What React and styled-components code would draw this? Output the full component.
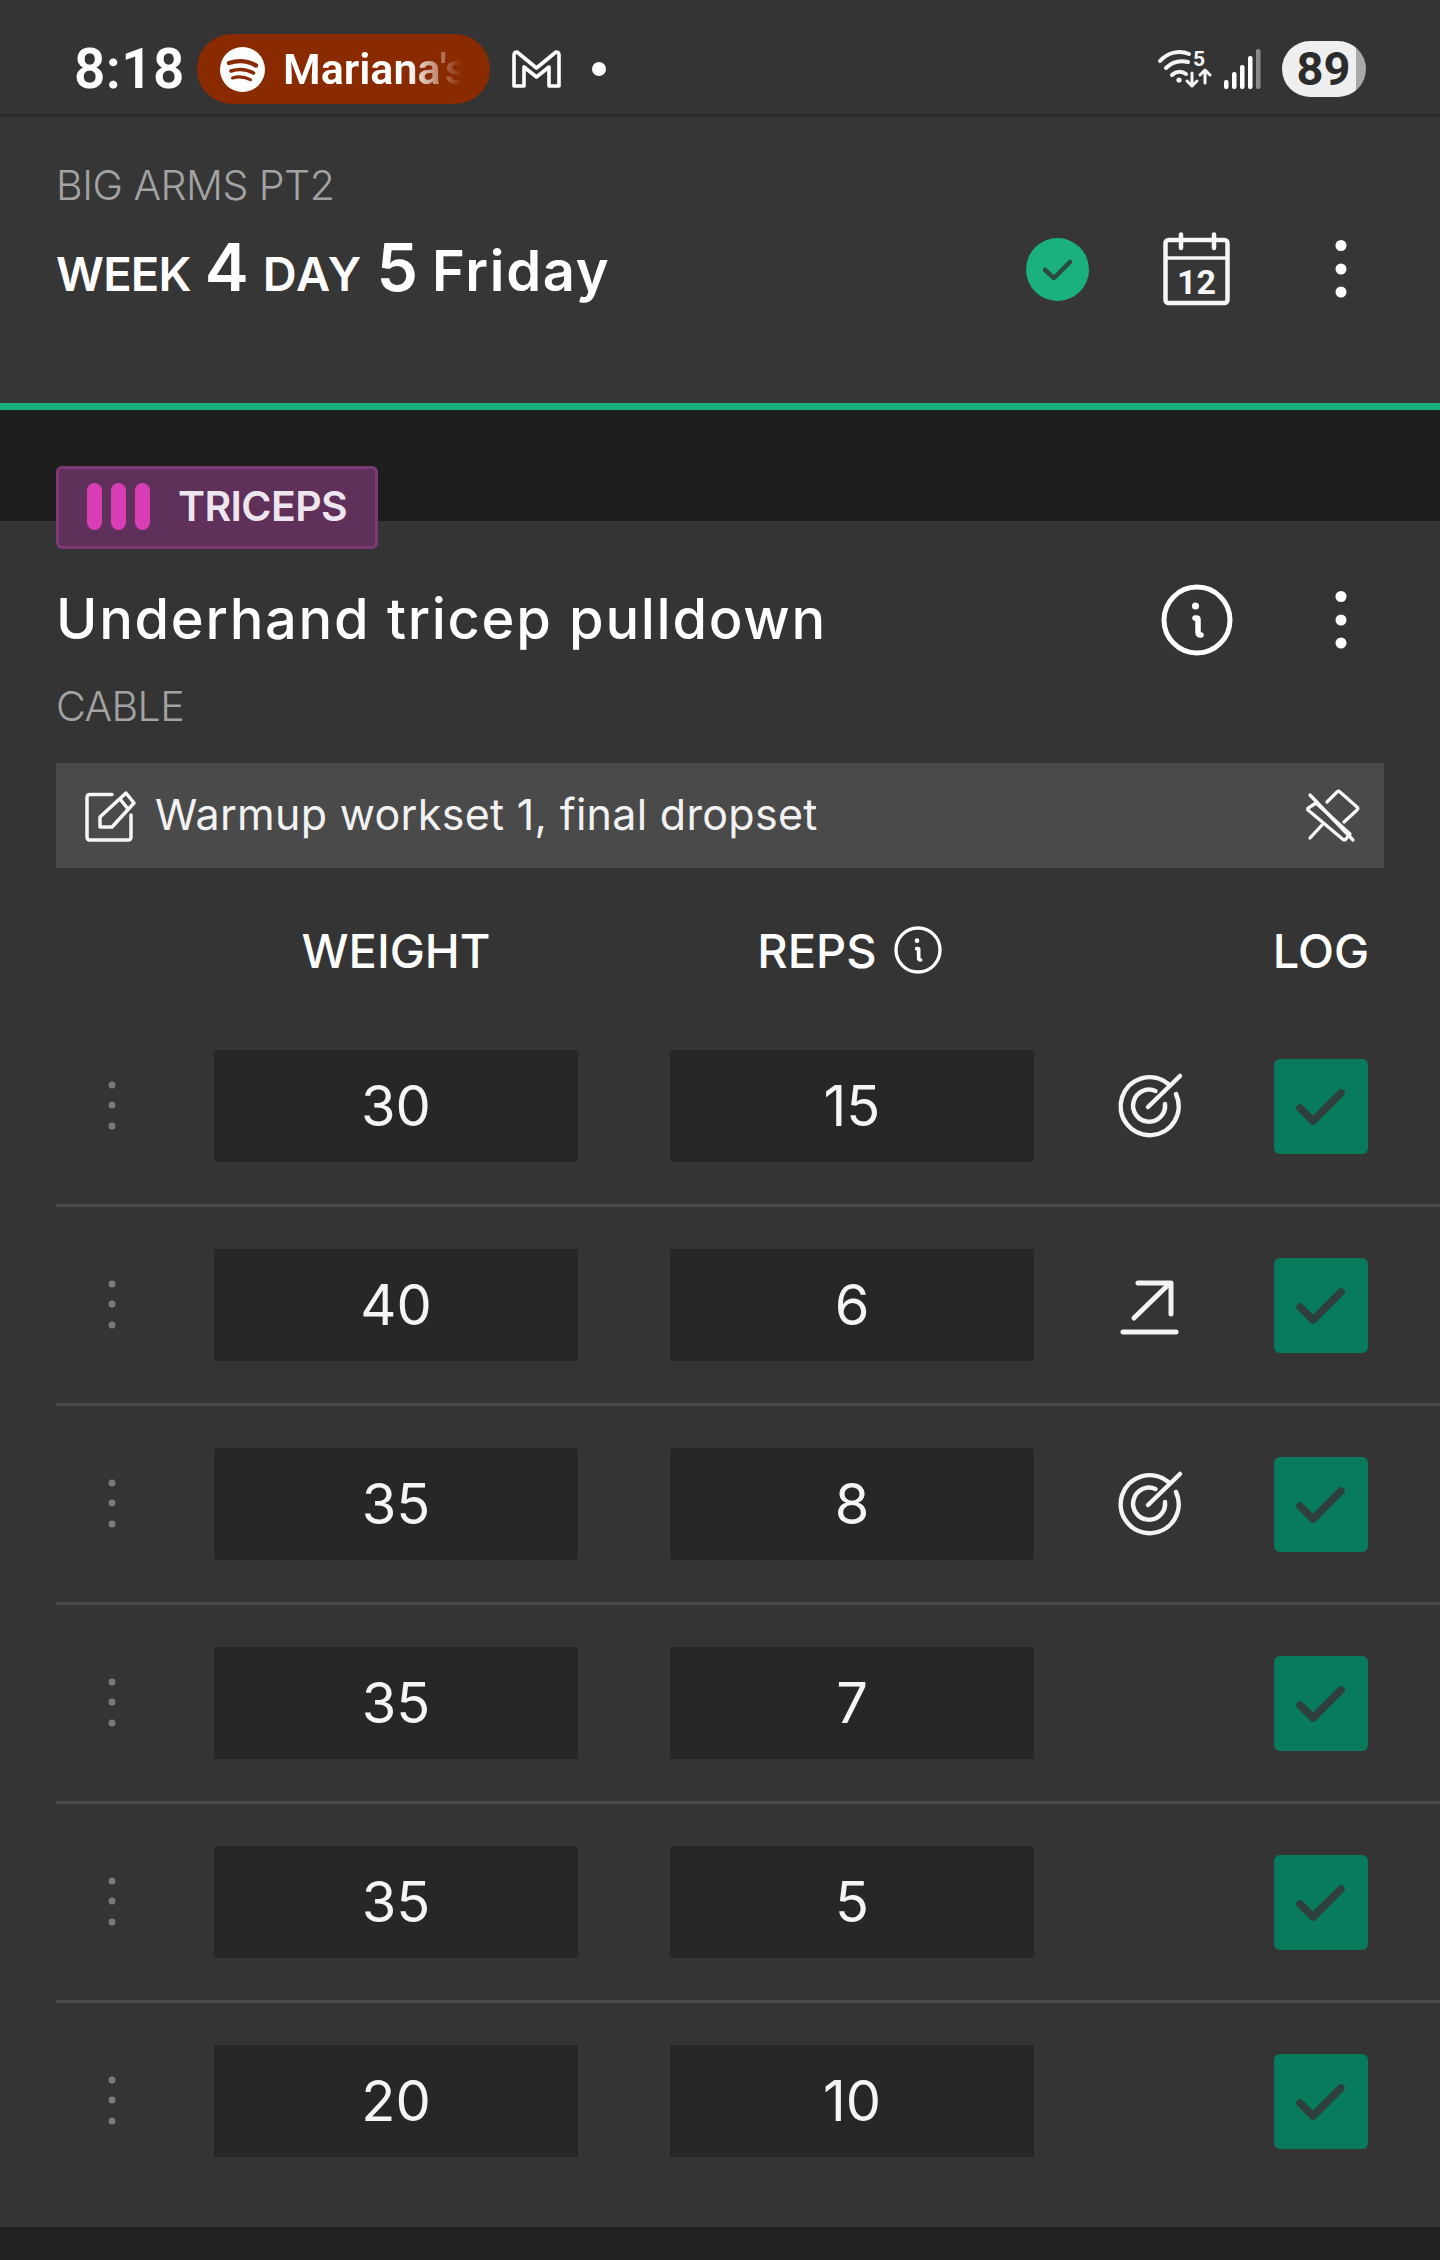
import React from "react";
import styled, { createGlobalStyle } from "styled-components";

const Global = createGlobalStyle`
  html, body { margin: 0; padding: 0; background: #212121; }
  body { font-family: "Inter", "Liberation Sans", sans-serif; color: #fff; }
  * { box-sizing: border-box; }
  svg { overflow: visible; }
`;

const Page = styled.div`
  width: 1440px;
  height: 2260px;
  background: #212121;
  overflow: hidden;
  display: flex;
  flex-direction: column;
`;

const StatusBar = styled.div`
  height: 117px;
  flex: none;
  background: #343434;
  border-bottom: 3px solid #2c2c2c;
  display: flex;
  align-items: center;
  padding: 24px 74px 0 74px;
`;
const Clock = styled.span`
  font-family: "Roboto", sans-serif;
  font-size: 55px;
  font-weight: 600;
  line-height: 1;
  letter-spacing: 0.4px;
  width: 123px;
  flex: none;
`;
const MediaPill = styled.div`
  width: 293px;
  height: 70px;
  flex: none;
  border-radius: 35px;
  background: #8a2a00;
  display: flex;
  align-items: center;
  padding-left: 23px;
  gap: 18px;
`;
const MediaText = styled.span`
  font-family: "Roboto", sans-serif;
  font-size: 43px;
  font-weight: 600;
  white-space: nowrap;
  -webkit-mask-image: linear-gradient(90deg, #000 68%, transparent 97%);
  mask-image: linear-gradient(90deg, #000 68%, transparent 97%);
`;
const MailIcon = styled.svg`
  width: 49px;
  height: 38px;
  margin-left: 22px;
  flex: none;
`;
const NoticeDot = styled.span`
  width: 14px;
  height: 14px;
  border-radius: 50%;
  background: #fff;
  margin-left: 31px;
  flex: none;
`;
const StatusRight = styled.div`
  margin-left: auto;
  display: flex;
  align-items: center;
`;
const WifiIcon = styled.svg`
  width: 54px;
  height: 38px;
  flex: none;
`;
const SignalIcon = styled.svg`
  width: 37px;
  height: 40px;
  margin-left: 12px;
  flex: none;
`;
const Battery = styled.div`
  width: 84px;
  height: 56px;
  margin-left: 21px;
  border-radius: 28px;
  background: linear-gradient(90deg, #efefef 88%, #a8a8a8 88%);
  color: #2c2c2c;
  font-family: "Roboto", sans-serif;
  font-size: 47px;
  font-weight: 700;
  line-height: 56px;
  text-align: center;
  padding-right: 1px;
`;

const Header = styled.header`
  height: 286px;
  flex: none;
  background: #363636;
  padding: 44px 93px 0 56px;
  display: flex;
  justify-content: space-between;
`;
const HeaderText = styled.div`
  display: flex;
  flex-direction: column;
`;
const Overline = styled.div`
  font-size: 41px;
  font-weight: 300;
  color: #a3a3a3;
  line-height: 50px;
  margin-top: -1px;
  letter-spacing: -0.5px;
`;
const DayTitle = styled.div`
  margin-top: 22px;
  font-size: 56px;
  font-weight: 600;
  line-height: 70px;
  white-space: nowrap;
  display: flex;
  align-items: baseline;
  letter-spacing: 1.7px;
`;
const Small = styled.span`
  font-size: 47px;
  letter-spacing: ${(p) => p.$track}px;
`;
const Big = styled.span`
  font-size: 66px;
  font-weight: 600;
  letter-spacing: 0;
  margin: 0 14px;
`;
const HeaderActions = styled.div`
  display: flex;
  align-items: center;
  height: 72px;
  margin-top: 72px;
`;
const DoneCircle = styled.svg`
  width: 63px;
  height: 63px;
  flex: none;
`;
const CalendarIcon = styled.svg`
  width: 67px;
  height: 72px;
  margin-left: 74px;
  flex: none;
`;
const KebabIcon = styled.svg`
  width: 12px;
  height: 60px;
  flex: none;
  margin-left: ${(p) => p.$offset}px;
`;

const GreenRule = styled.div`
  height: 7px;
  flex: none;
  background: #1ab17f;
`;
const Gutter = styled.div`
  height: 111px;
  flex: none;
  background: #1e1e1e;
`;

const Panel = styled.section`
  height: 1706px;
  flex: none;
  background: #343434;
  padding: 0 56px;
`;
const Badge = styled.div`
  width: 322px;
  height: 83px;
  margin-top: -55px;
  background: #5f3059;
  border: 3px solid #7b3a75;
  border-radius: 6px;
  display: flex;
  align-items: center;
  padding: 0 0 2px 28px;
  position: relative;
`;
const MuscleBars = styled.div`
  display: flex;
  gap: 9px;
`;
const MuscleBar = styled.span`
  width: 15px;
  height: 47px;
  border-radius: 8px;
  background: #d83db6;
`;
const BadgeLabel = styled.span`
  font-size: 41px;
  font-weight: 600;
  color: #eee6ef;
  margin: -2px 0 0 28px;
  letter-spacing: -0.6px;
`;
const TitleRow = styled.div`
  height: 84px;
  margin-top: 29px;
  display: flex;
  align-items: center;
  justify-content: space-between;
  padding-right: 37px;
`;
const ExerciseName = styled.h1`
  margin: -2px 0 0;
  font-size: 56px;
  font-weight: 500;
  line-height: 84px;
  white-space: nowrap;
  letter-spacing: 1.7px;
`;
const TitleActions = styled.div`
  display: flex;
  align-items: center;
`;
const InfoIcon = styled.svg`
  width: ${(p) => p.$size}px;
  height: ${(p) => p.$size}px;
  flex: none;
`;
const Equipment = styled.div`
  font-size: 41px;
  font-weight: 300;
  color: #a3a3a3;
  line-height: 50px;
  margin-top: 19px;
  letter-spacing: -0.6px;
`;
const Note = styled.div`
  height: 105px;
  margin-top: 32px;
  background: #4a4a4a;
  display: flex;
  align-items: center;
  padding: 0 25px 0 29px;
`;
const EditIcon = styled.svg`
  width: 50px;
  height: 50px;
  flex: none;
`;
const NoteText = styled.span`
  font-size: 43px;
  font-weight: 400;
  color: #f2f2f2;
  margin: -3px 0 0 20px;
  flex: 1;
  white-space: nowrap;
  letter-spacing: 0.3px;
`;
const PinIcon = styled.svg`
  width: 52px;
  height: 52px;
  flex: none;
`;

const Columns = `
  display: grid;
  grid-template-columns: 158px 364px 92px 364px 240px 94px;
`;
const TableHead = styled.div`
  ${Columns}
  height: 140px;
  padding-top: 54px;
`;
const HeadCell = styled.div`
  grid-column: ${(p) => p.$col};
  height: 56px;
  display: flex;
  align-items: center;
  justify-content: center;
  gap: 17px;
  padding-right: ${(p) => p.$inset || 0}px;
  font-size: 47px;
  font-weight: 500;
  white-space: nowrap;
`;
const SetRow = styled.div`
  ${Columns}
  align-items: center;
  margin-right: -56px;
  padding: 42px 0;
  border-top: ${(p) => (p.$first ? "0" : "3px solid #4a4a4a")};
`;
const Grip = styled.svg`
  width: 112px;
  height: 56px;
`;
const ValueBox = styled.div`
  height: 112px;
  background: #272727;
  border-radius: 2px;
  display: flex;
  align-items: center;
  justify-content: center;
  font-size: 56px;
  font-weight: 400;
  color: #f5f5f5;
`;
const StatusCell = styled.div`
  display: flex;
  justify-content: center;
  padding-right: 8px;
`;
const StateIcon = styled.svg`
  width: 64px;
  height: 64px;
`;
const LogButton = styled.div`
  width: 94px;
  height: 95px;
  border-radius: 6px;
  background: #077b5b;
  display: flex;
  align-items: center;
  justify-content: center;
`;
const CheckIcon = styled.svg`
  width: 50px;
  height: 38px;
  margin-top: 2px;
`;

const Spotify = () => (
  <svg width="45" height="45" viewBox="0 0 45 45" style={{ flex: "none" }}>
    <circle cx="22.5" cy="22.5" r="22.5" fill="#fff" />
    <g fill="none" stroke="#8a2a00" strokeLinecap="round">
      <path d="M9 16c9-3 19-2 27 2.5" strokeWidth="4.4" />
      <path d="M11 24c8-2.5 16-1.5 22.5 2" strokeWidth="3.6" />
      <path d="M12.5 31c6.500-2 13-1 18 1.800" strokeWidth="3" />
    </g>
  </svg>
);

const Kebab = ({ offset }) => (
  <KebabIcon $offset={offset} viewBox="0 0 12 60" fill="#fff">
    <circle cx="6" cy="6.500" r="5.500" />
    <circle cx="6" cy="30" r="5.500" />
    <circle cx="6" cy="53" r="5.500" />
  </KebabIcon>
);

const Info = ({ size, sw }) => (
  <InfoIcon $size={size} viewBox="0 0 72 72" fill="none" stroke="#fff" strokeWidth={sw}>
    <circle cx="36" cy="36" r={36 - sw / 2 - 0.5} />
    <path d="M34 34h1.500c1 0 1.500.7 1.500 1.500V48c0 2 1 3 3 3" strokeLinecap="round" strokeWidth={sw + 0.5} />
    <circle cx="34.500" cy="22" r="3.500" fill="#fff" stroke="none" />
  </InfoIcon>
);

const Target = () => (
  <StateIcon viewBox="0 0 64 64" fill="none" stroke="#f4f4f4" strokeWidth="4.500" strokeLinecap="round">
    <path d="M50 9.700A29 29 0 1 0 58 20" />
    <path d="M37.500 17A16 16 0 1 0 47 30" />
    <path d="M30 33L62 2" />
  </StateIcon>
);

const Trend = () => (
  <StateIcon viewBox="0 0 64 64" fill="none" stroke="#f4f4f4" strokeWidth="5" strokeLinecap="round" strokeLinejoin="round">
    <path d="M5 59H58" />
    <path d="M16 45L50 12" />
    <path d="M20 10H53V41" />
  </StateIcon>
);

const rows = [
  ["30", "15", "target"],
  ["40", "6", "trend"],
  ["35", "8", "target"],
  ["35", "7", null],
  ["35", "5", null],
  ["20", "10", null],
];

export default function App() {
  return (
    <Page>
      <Global />
      <StatusBar>
        <Clock>8:18</Clock>
        <MediaPill>
          <Spotify />
          <MediaText>Mariana's</MediaText>
        </MediaPill>
        <MailIcon viewBox="0 0 49 38" fill="none" stroke="#fff" strokeWidth="3.600" strokeLinejoin="round">
          <path d="M5 2L24.500 18L44 2C46 2 47 3 47 5V36H37V17L24.500 27L12 17V36H2V5C2 3 3 2 5 2Z" />
        </MailIcon>
        <NoticeDot />
        <StatusRight>
          <WifiIcon viewBox="0 0 54 38" fill="none" stroke="#f5f5f5" strokeLinecap="round">
            <path d="M2 11C10 2 22 0 31 4" strokeWidth="4" />
            <path d="M8 18C14 12 22 10 30 12" strokeWidth="4" />
            <path d="M14 25C18 21 24 21 28 24" strokeWidth="4" />
            <circle cx="21" cy="30" r="2.600" fill="#f5f5f5" stroke="none" />
            <text x="35" y="16" fill="#f5f5f5" stroke="none" fontFamily="Roboto, sans-serif" fontSize="21" fontWeight="700">5</text>
            <path d="M34 23V36M29 31L34 36L39 31" strokeWidth="3" strokeLinejoin="round" />
            <path d="M47 33V20M42 25L47 20L52 25" strokeWidth="3" strokeLinejoin="round" />
          </WifiIcon>
          <SignalIcon viewBox="0 0 37 40">
            <rect x="0" y="31" width="4.500" height="9" rx="2" fill="#fff" />
            <rect x="8" y="23" width="4.500" height="17" rx="2" fill="#fff" />
            <rect x="16" y="16" width="4.500" height="24" rx="2" fill="#fff" />
            <rect x="24" y="7" width="4.500" height="33" rx="2" fill="#fff" />
            <rect x="32" y="0" width="4.500" height="40" rx="2" fill="#8a8a8a" />
          </SignalIcon>
          <Battery>89</Battery>
        </StatusRight>
      </StatusBar>

      <Header>
        <HeaderText>
          <Overline>BIG ARMS PT2</Overline>
          <DayTitle>
            <Small $track={-0.8}>WEEK</Small>
            <Big>4</Big>
            <Small $track={1.2}>DAY</Small>
            <Big>5</Big>
            <span>Friday</span>
          </DayTitle>
        </HeaderText>
        <HeaderActions>
          <DoneCircle viewBox="0 0 63 63">
            <circle cx="31.500" cy="31.500" r="31.500" fill="#1ab17f" />
            <path d="M19 32L28 40L44 24" fill="none" stroke="#2c4a42" strokeWidth="4.500" strokeLinecap="round" strokeLinejoin="round" />
          </DoneCircle>
          <CalendarIcon viewBox="0 0 67 72" fill="none" stroke="#f6f6f6" strokeWidth="4.500">
            <rect x="2.500" y="7" width="62" height="63" rx="3" />
            <path d="M2.500 25H64.500" strokeWidth="3.500" />
            <path d="M18 1.500V15M51 1.500V15" strokeWidth="4.500" strokeLinecap="round" />
            <text x="33.500" y="61" textAnchor="middle" fill="#f6f6f6" stroke="none" fontFamily="Roboto, sans-serif" fontSize="34" fontWeight="700">12</text>
          </CalendarIcon>
          <Kebab offset={105} />
        </HeaderActions>
      </Header>
      <GreenRule />
      <Gutter />

      <Panel>
        <Badge>
          <MuscleBars>
            <MuscleBar />
            <MuscleBar />
            <MuscleBar />
          </MuscleBars>
          <BadgeLabel>TRICEPS</BadgeLabel>
        </Badge>
        <TitleRow>
          <ExerciseName>Underhand tricep pulldown</ExerciseName>
          <TitleActions>
            <Info size={72} sw={5} />
            <Kebab offset={102} />
          </TitleActions>
        </TitleRow>
        <Equipment>CABLE</Equipment>
        <Note>
          <EditIcon viewBox="0 0 50 50" fill="none" stroke="#f6f6f6" strokeWidth="3.500" strokeLinejoin="round" strokeLinecap="round">
            <path d="M27 3.500H5C3 3.500 2 4.500 2 6.500V46C2 48 3 49 5 49H43C45 49 46 48 46 46V24" />
            <path d="M41 2L49 12L27 36H15V26Z" />
            <path d="M35 8L43 18" />
          </EditIcon>
          <NoteText>Warmup workset 1, final dropset</NoteText>
          <PinIcon viewBox="0 0 52 52" fill="none" stroke="#f6f6f6" strokeWidth="3.300" strokeLinecap="round" strokeLinejoin="round">
            <path d="M3 5L46 50" />
            <path d="M20 12L30 2C31 1 32 1 33 2L50 17C51 18 51 19 50 20L37 32" />
            <path d="M1 20C0.500 19 1 18 2 17.500L9 13L43 44L39 49C38 50 36.500 50 35.500 49Z" />
            <path d="M3 48L15 35" />
          </PinIcon>
        </Note>
        <TableHead>
          <HeadCell $col="2">WEIGHT</HeadCell>
          <HeadCell $col="4" $inset={5}>
            REPS
            <Info size={48} sw={5} />
          </HeadCell>
          <HeadCell $col="6">LOG</HeadCell>
        </TableHead>
        {rows.map(([weight, reps, state], i) => (
          <SetRow key={i} $first={i === 0}>
            <Grip viewBox="0 0 112 56" fill="#7a7a7a">
              <circle cx="56" cy="7" r="3.500" />
              <circle cx="56" cy="27" r="3.500" />
              <circle cx="56" cy="48" r="3.500" />
            </Grip>
            <ValueBox>{weight}</ValueBox>
            <span />
            <ValueBox>{reps}</ValueBox>
            <StatusCell>
              {state === "target" && <Target />}
              {state === "trend" && <Trend />}
            </StatusCell>
            <LogButton>
              <CheckIcon viewBox="0 0 50 38" fill="none" stroke="#2f3f3d" strokeWidth="7.500" strokeLinecap="round" strokeLinejoin="round">
                <path d="M4 20L17 33L45 5" />
              </CheckIcon>
            </LogButton>
          </SetRow>
        ))}
      </Panel>
    </Page>
  );
}
